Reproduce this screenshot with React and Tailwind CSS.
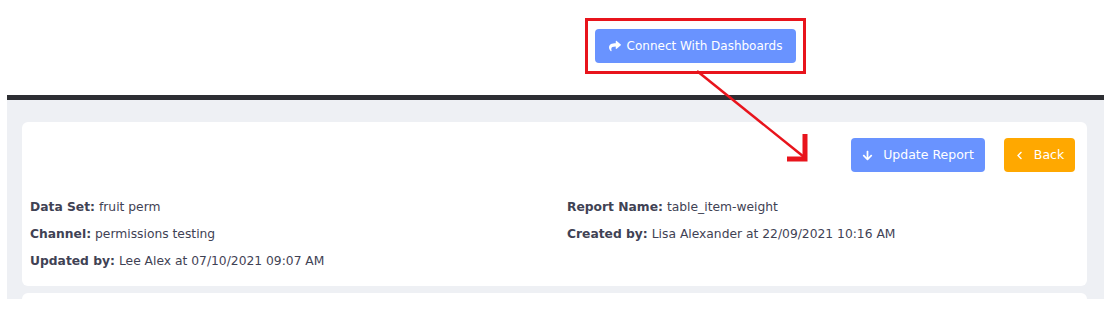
import React from 'react';
import { FaShare, FaArrowDown, FaChevronLeft } from 'react-icons/fa';

const Field = ({ label, value }) => (
  <div className="h-[27px] flex items-center">
    <span className="font-bold">{label}</span>
    <span className="ml-1">{value}</span>
  </div>
);

const App = () => {
  return (
    <div
      className="relative w-[1108px] h-[321px] bg-white overflow-hidden text-[12.3px] text-[#3f4254]"
      style={{ fontFamily: '"DejaVu Sans", Verdana, sans-serif' }}
    >
      {/* Top bar with highlighted button */}
      <div className="h-[95px] pt-[18px] pl-[585px]">
        <div className="inline-block border-[3px] border-[#e8141c] px-[7px] py-[8px]">
          <button className="h-[34px] w-[201px] rounded bg-[#6993ff] text-white flex items-center justify-center gap-[6px] text-[12px]">
            <FaShare className="w-[12px] h-[12px]" />
            Connect With Dashboards
          </button>
        </div>
      </div>

      {/* Content area */}
      <div className="mx-[7px] w-[1097px] border-t-[5px] border-[#2d2e33] bg-[#eef0f4] h-[204px] px-[15px] pt-[22px]">
        <div className="bg-white rounded-md w-[1065px] h-[164px] px-[8px] pt-[16px]">
          <div className="flex justify-end gap-[19px] pr-[4px]">
            <button className="h-[34px] w-[134px] rounded bg-[#6993ff] text-white flex items-center justify-center gap-[10px] text-[12.5px]">
              <FaArrowDown className="w-[11px] h-[11px]" />
              Update Report
            </button>
            <button className="h-[34px] w-[71px] rounded bg-[#ffa800] text-white flex items-center justify-center gap-[10px] text-[12.5px]">
              <FaChevronLeft className="w-[9px] h-[9px]" />
              Back
            </button>
          </div>
          <div className="grid grid-cols-[537px_1fr] mt-[22px]">
            <div>
              <Field label="Data Set:" value="fruit perm" />
              <Field label="Channel:" value="permissions testing" />
              <Field label="Updated by:" value="Lee Alex at 07/10/2021 09:07 AM" />
            </div>
            <div>
              <Field label="Report Name:" value="table_item-weight" />
              <Field label="Created by:" value="Lisa Alexander at 22/09/2021 10:16 AM" />
            </div>
          </div>
        </div>
        <div className="bg-white rounded-md w-[1065px] h-[20px] mt-[7px]" />
      </div>

      {/* Annotation arrow */}
      <svg className="absolute left-0 top-0 pointer-events-none" width="1108" height="321">
        <line x1="697" y1="71" x2="804" y2="157" stroke="#e8141c" strokeWidth="2.5" />
        <path d="M805 134 L805 159 L787 159" fill="none" stroke="#e8141c" strokeWidth="5" strokeLinejoin="miter" />
      </svg>
    </div>
  );
};

export default App;
